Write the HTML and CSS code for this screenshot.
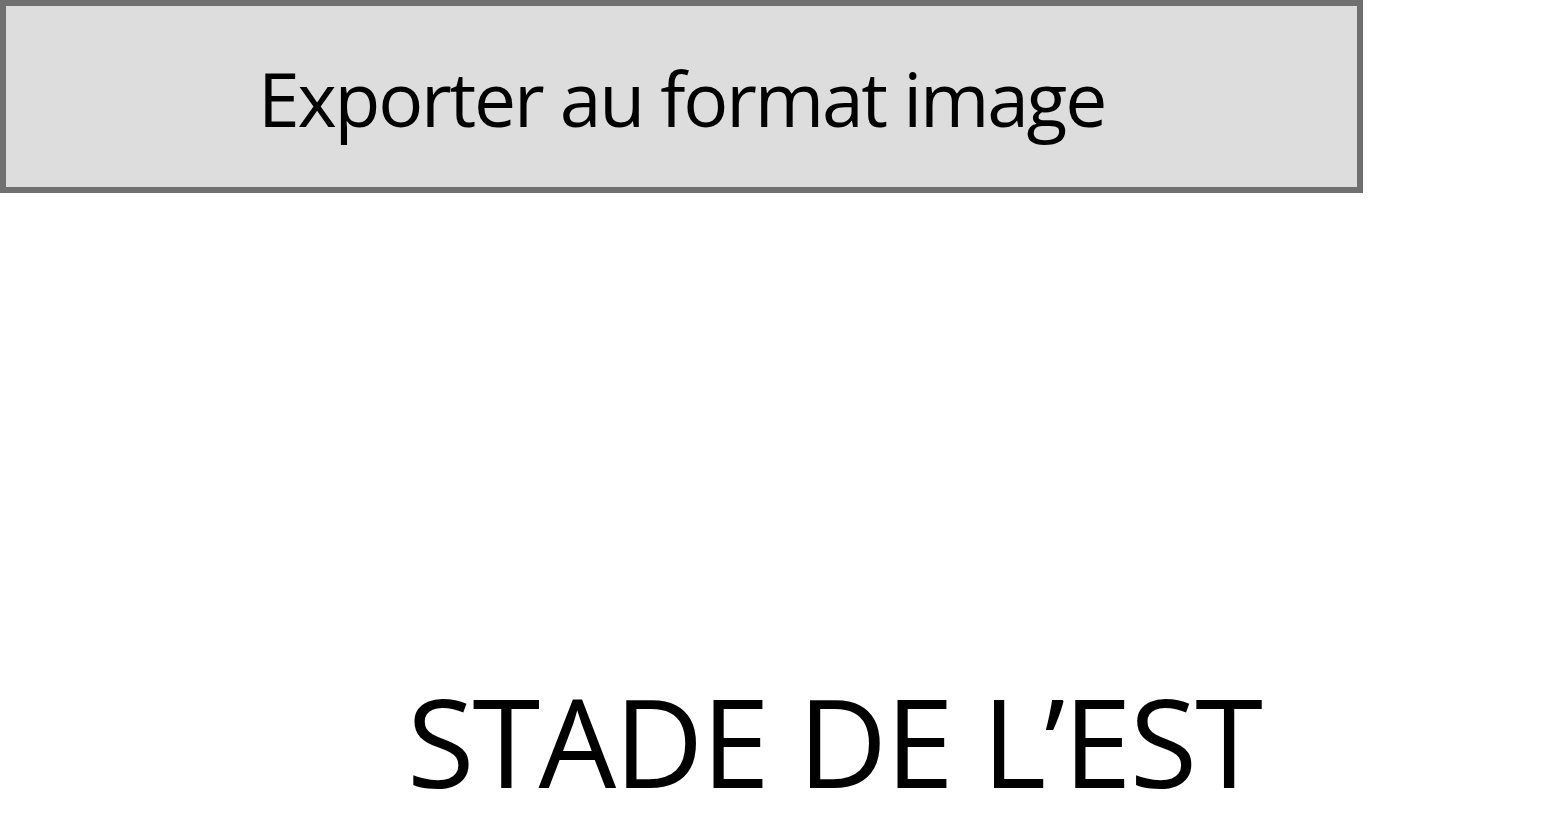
FILE: index.html
```html
<!DOCTYPE html>
<html lang="fr">
<head>
<meta charset="utf-8">
<title>Stade de l'Est</title>
<link rel="stylesheet" href="styles.css">
</head>
<body>
<button class="export-btn" type="button">Exporter au format image</button>
<div class="stage">
  <h1 class="title">STADE DE L’EST</h1>
</div>
</body>
</html>
```
FILE: styles.css
```css
html, body {
  margin: 0;
  padding: 0;
  background: #ffffff;
}
body {
  font-family: "Open Sans", "Noto Sans", sans-serif;
  color: #000;
}
.export-btn {
  display: block;
  box-sizing: border-box;
  width: 1363px;
  height: 193px;
  margin: 0;
  padding: 3px 0 0 0;
  border: 6px solid #707070;
  background: #dddddd;
  font-family: "Open Sans", "Noto Sans", sans-serif;
  font-size: 75px;
  letter-spacing: -2.2px;
  color: #000;
  text-align: center;
}
.stage {
  padding-top: 474px;
  padding-left: 407px;
}
.title {
  margin: 0;
  font-weight: 400;
  font-size: 123px;
  letter-spacing: -1.9px;
  line-height: 1.2;
}
```
